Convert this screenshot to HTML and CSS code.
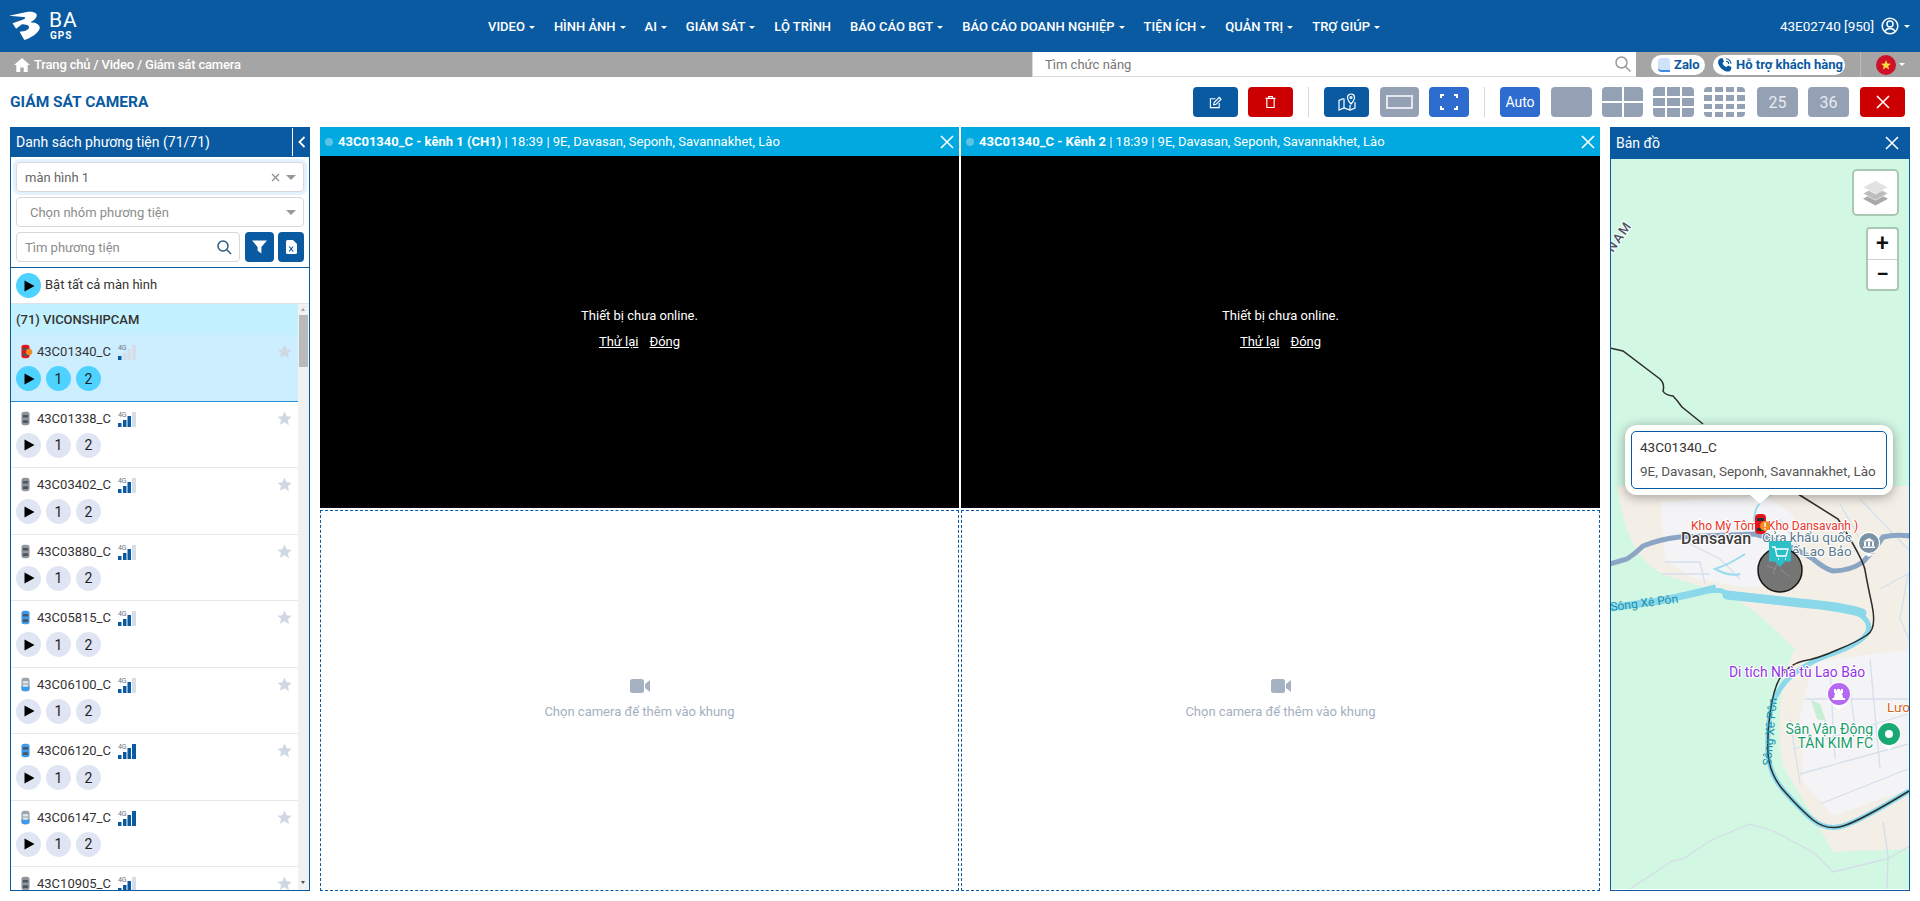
FILE: index.html
```html
<!DOCTYPE html>
<html lang="vi">
<head>
  <meta charset="UTF-8" />
  <meta name="viewport" content="width=device-width, initial-scale=1.0" />
  <title>Giám sát camera</title>
  <link rel="stylesheet" href="styles.css">
</head>
<body>

  <svg class="defs" width="0" height="0">
    <symbol id="car" viewBox="0 0 10 16">
      <rect x="0.5" y="0.5" width="9" height="15" rx="3" fill="currentColor"/>
      <rect x="2" y="4" width="6" height="3" rx="1" fill="#4a5560"/>
      <rect x="2" y="10" width="6" height="3" rx="1" fill="#4a5560"/>
    </symbol>
    <symbol id="carmix" viewBox="0 0 10 16">
      <rect x="0.5" y="0.5" width="9" height="15" rx="3" fill="#9aa5ad"/>
      <path d="M0.5 10h9v2.5a3 3 0 0 1-3 3h-3a3 3 0 0 1-3-3z" fill="#3d9be9"/>
      <rect x="2" y="4" width="6" height="3" rx="1" fill="#dfe6ea"/>
      <rect x="2" y="8" width="6" height="2.5" rx="1" fill="#dfe6ea"/>
    </symbol>
    <symbol id="star" viewBox="0 0 16 16">
      <path d="M8 .6l2.3 4.9 5.3.7-3.9 3.7 1 5.3L8 12l-4.7 2.6 1-5.3L.4 6.2l5.3-.7z"/>
    </symbol>
    <symbol id="play" viewBox="0 0 11 12">
      <path d="M0.5 0.5L10.5 6L0.5 11.5z"/>
    </symbol>
    <symbol id="sig1" viewBox="0 0 18 15">
      <rect x="0" y="11" width="3.5" height="4" class="bar-on"/><rect x="5" y="8" width="3.5" height="7" class="bar-off"/><rect x="9.5" y="4" width="3.5" height="11" class="bar-off"/><rect x="14" y="0" width="4" height="15" class="bar-off"/>
    </symbol>
    <symbol id="sig3" viewBox="0 0 18 15">
      <rect x="0" y="11" width="3.5" height="4" class="bar-on"/><rect x="5" y="8" width="3.5" height="7" class="bar-on"/><rect x="9.5" y="4" width="3.5" height="11" class="bar-on"/><rect x="14" y="0" width="4" height="15" class="bar-off"/>
    </symbol>
    <symbol id="sig4" viewBox="0 0 18 15">
      <rect x="0" y="11" width="3.5" height="4" class="bar-on"/><rect x="5" y="8" width="3.5" height="7" class="bar-on"/><rect x="9.5" y="4" width="3.5" height="11" class="bar-on"/><rect x="14" y="0" width="4" height="15" class="bar-on"/>
    </symbol>
    <symbol id="cam" viewBox="0 0 20 14">
      <rect x="0" y="0" width="14" height="14" rx="2.5"/>
      <path d="M15 5l5-4v12l-5-4z"/>
    </symbol>
    <symbol id="close" viewBox="0 0 14 14">
      <path d="M1 1l12 12M13 1L1 13" fill="none" stroke="currentColor" stroke-width="1.6"/>
    </symbol>
  </svg>

  <header class="topbar">
    <div class="logo">
      <svg class="logo-mark" viewBox="0 0 28 32" width="33" height="30" preserveAspectRatio="none">
        <path d="M0 5L15 1C22 0 25 3 23 7C22 9 20 11 18 12C23 12 27 15 26 19C24 25 18 29 13 31L9 22C13 22 17 20 17 17C17 15 14 14 11 14L6 19L3 13L11 9.500C14 8.500 15 6.500 12 6.500Z" fill="#fff"/>
      </svg>
      <div class="logo-text"><span class="logo-ba">BA</span><span class="logo-gps">GPS</span></div>
    </div>
    <nav class="nav">
      <a class="caret">VIDEO</a>
      <a class="caret">HÌNH ẢNH</a>
      <a class="caret">AI</a>
      <a class="caret">GIÁM SÁT</a>
      <a>LỘ TRÌNH</a>
      <a class="caret">BÁO CÁO BGT</a>
      <a class="caret">BÁO CÁO DOANH NGHIỆP</a>
      <a class="caret">TIỆN ÍCH</a>
      <a class="caret">QUẢN TRỊ</a>
      <a class="caret">TRỢ GIÚP</a>
    </nav>
    <div class="user caret">
      <span>43E02740 [950]</span>
      <svg viewBox="0 0 18 18" width="18" height="18" fill="none" stroke="#fff" stroke-width="1.5">
        <circle cx="9" cy="9" r="7.800"/><circle cx="9" cy="7" r="3"/><path d="M3.800 14.500C5 12 7 11.500 9 11.500S13 12 14.200 14.500"/>
      </svg>
    </div>
  </header>

  <div class="crumbbar">
    <svg class="home" viewBox="0 0 16 14" width="16" height="14" fill="#fff">
      <path d="M8 0L0 7h2.300v7h4V9.500h3.400V14h4V7H16z"/>
    </svg>
    <span class="crumbs">Trang chủ / Video / Giám sát camera</span>
    <div class="func-search">
      <span>Tìm chức năng</span>
      <svg viewBox="0 0 16 16" width="16" height="16" fill="none" stroke="#9a9a9a" stroke-width="1.500">
        <circle cx="6.500" cy="6.500" r="5.500"/><path d="M10.500 10.500L15.500 15.500"/>
      </svg>
    </div>
    <a class="pill pill-zalo">
      <svg viewBox="0 0 14 16" width="14" height="16"><rect x="1" y="1" width="12" height="14" rx="3.500" fill="#cfe2fb"/><path d="M1 11c0 3 2 4 4 4h8v-2H5c-2 0-3-.5-4-2z" fill="#3f8ae8"/></svg>
      Zalo
    </a>
    <a class="pill pill-help">
      <svg viewBox="0 0 16 16" width="16" height="16" fill="none"><path d="M3 1.500L5.500 1l1.500 3.500-1.500 1.500c.5 2 2 3.500 4 4l1.500-1.500L14.500 10l-.5 2.500C13 15 10.500 15 8 14 4.500 12.500 2 9.500 1.200 6.500.8 4.500 1.500 2.500 3 1.500z" fill="#0a5aa2"/><path d="M9 1.800a5 5 0 0 1 5 5M9 4.200a2.700 2.700 0 0 1 2.700 2.700" stroke="#0a5aa2" stroke-width="1.100"/></svg>
      Hỗ trợ khách hàng
    </a>
    <span class="crumb-sep"></span>
    <svg class="flag" viewBox="0 0 20 20" width="20" height="20">
      <circle cx="10" cy="10" r="10" fill="#cf1128"/>
      <path d="M10 5l1.400 3.500 3.600.2-2.800 2.300 1 3.500-3.200-2-3.200 2 1-3.500L5 8.700l3.600-.2z" fill="#ffd83a"/>
    </svg>
    <span class="caret flag-caret"></span>
  </div>

  <div class="titlebar">
    <h1>GIÁM SÁT CAMERA</h1>
    <div class="tools">
      <button class="tool tool-wide blue">
        <svg viewBox="0 0 14 14" width="13" height="13" fill="none" stroke="#fff" stroke-width="1.200"><path d="M11 7.500V12.500H1.500V3H7"/><path d="M5 9.500L5.500 7 11 1.500 13 3.500 7.500 9z"/></svg>
      </button>
      <button class="tool tool-wide red">
        <svg viewBox="0 0 12 14" width="11" height="14" fill="none" stroke="#fff" stroke-width="1.300"><path d="M2 3.500V13h8V3.500M0.500 3h11M4 3V1h4v2"/></svg>
      </button>
      <span class="tool-sep"></span>
      <button class="tool tool-wide blue tool-map">
        <svg viewBox="0 0 18 18" width="18" height="18" fill="none" stroke="#fff" stroke-width="1.200"><path d="M5.500 5.500L1 7.500V17l5-2 6 2 5-2V9"/><path d="M6 5.500V15M12 12v5"/><path d="M13 1a3.500 3.500 0 0 0-3.500 3.500C9.500 7 13 11 13 11s3.500-4 3.500-6.500A3.500 3.500 0 0 0 13 1z"/><circle cx="13" cy="4.500" r="1"/></svg>
      </button>
      <button class="tool gray tool-box"><span class="box-icon"></span></button>
      <button class="tool mid tool-full">
        <svg viewBox="0 0 18 16" width="18" height="16" fill="none" stroke="#fff" stroke-width="2"><path d="M1 4V1h3M14 1h3v3M17 12v3h-3M4 15H1v-3"/></svg>
      </button>
      <span class="tool-sep"></span>
      <button class="tool mid auto">Auto</button>
      <button class="tool gray"></button>
      <div class="tool layout layout-2"><i></i><i></i><i></i><i></i></div>
      <div class="tool layout layout-3"><i></i><i></i><i></i><i></i><i></i><i></i><i></i><i></i><i></i></div>
      <div class="tool layout layout-4"><i></i><i></i><i></i><i></i><i></i><i></i><i></i><i></i><i></i><i></i><i></i><i></i><i></i><i></i><i></i><i></i></div>
      <button class="tool gray num num-first">25</button>
      <button class="tool gray num">36</button>
      <button class="tool tool-wide red close-all">
        <svg viewBox="0 0 14 14" width="14" height="14"><use href="#close"/></svg>
      </button>
    </div>
  </div>

  <main class="workspace">

    <aside class="vehicles">
      <div class="panel-head vehicles-head">
        <span>Danh sách phương tiện (71/71)</span>
        <button class="collapse">
          <svg viewBox="0 0 8 12" width="8" height="12" fill="none" stroke="#fff" stroke-width="1.800"><path d="M6.500 1L1.500 6l5 5"/></svg>
        </button>
      </div>
      <div class="filters">
        <div class="select select-focus">
          <span>màn hình 1</span>
          <svg class="sel-x" viewBox="0 0 9 9" width="9" height="9" fill="none" stroke="#8a8f96" stroke-width="1.200"><path d="M1 1l7 7M8 1L1 8"/></svg>
          <i class="sel-arrow"></i>
        </div>
        <div class="select select-group">
          <span>Chọn nhóm phương tiện</span>
          <i class="sel-arrow"></i>
        </div>
        <div class="search-row">
          <div class="search-box">
            <span>Tìm phương tiện</span>
            <svg viewBox="0 0 15 15" width="15" height="15" fill="none" stroke="#2a5b86" stroke-width="1.500"><circle cx="6" cy="6" r="5"/><path d="M9.800 9.800L14 14"/></svg>
          </div>
          <button class="square-btn filter-btn">
            <svg viewBox="0 0 16 14" width="15" height="14" fill="#fff"><path d="M0 0h16L10 7v7L6 11V7z"/></svg>
          </button>
          <button class="square-btn excel-btn">
            <svg viewBox="0 0 11 14" width="11" height="14"><path d="M0 1.500A1.500 1.500 0 0 1 1.500 0H7l4 4v8.500a1.500 1.500 0 0 1-1.500 1.500h-8A1.500 1.500 0 0 1 0 12.500z" fill="#fff"/><path d="M3.200 6.500l4 5M7.200 6.500l-4 5" stroke="#0a5aa2" stroke-width="1.200"/></svg>
          </button>
        </div>
      </div>
      <div class="all-row">
        <span class="round on"><svg viewBox="0 0 11 12" width="11" height="12"><use href="#play"/></svg></span>
        <span class="all-label">Bật tất cả màn hình</span>
      </div>
      <div class="list-wrap">
        <div class="list">
          <div class="group">(71) VICONSHIPCAM</div>

          <div class="row row-active">
            <div class="row-top">
              <svg class="car car-red" viewBox="0 0 10 16"><use href="#car"/><circle cx="9" cy="8.500" r="3.500" fill="#f28a1e"/></svg>
              <span class="plate">43C01340_C</span>
              <span class="sig"><em>4G</em><svg><use href="#sig1"/></svg></span>
              <svg class="star"><use href="#star"/></svg>
            </div>
            <div class="row-btns">
              <span class="round on"><svg viewBox="0 0 11 12" width="11" height="12"><use href="#play"/></svg></span>
              <span class="round on">1</span>
              <span class="round on">2</span>
            </div>
          </div>

          <div class="row">
            <div class="row-top">
              <svg class="car car-gray"><use href="#car"/></svg>
              <span class="plate">43C01338_C</span>
              <span class="sig"><em>4G</em><svg><use href="#sig3"/></svg></span>
              <svg class="star"><use href="#star"/></svg>
            </div>
            <div class="row-btns">
              <span class="round"><svg viewBox="0 0 11 12" width="11" height="12"><use href="#play"/></svg></span>
              <span class="round">1</span>
              <span class="round">2</span>
            </div>
          </div>

          <div class="row">
            <div class="row-top">
              <svg class="car car-gray"><use href="#car"/></svg>
              <span class="plate">43C03402_C</span>
              <span class="sig"><em>4G</em><svg><use href="#sig3"/></svg></span>
              <svg class="star"><use href="#star"/></svg>
            </div>
            <div class="row-btns">
              <span class="round"><svg viewBox="0 0 11 12" width="11" height="12"><use href="#play"/></svg></span>
              <span class="round">1</span>
              <span class="round">2</span>
            </div>
          </div>

          <div class="row">
            <div class="row-top">
              <svg class="car car-gray"><use href="#car"/></svg>
              <span class="plate">43C03880_C</span>
              <span class="sig"><em>4G</em><svg><use href="#sig3"/></svg></span>
              <svg class="star"><use href="#star"/></svg>
            </div>
            <div class="row-btns">
              <span class="round"><svg viewBox="0 0 11 12" width="11" height="12"><use href="#play"/></svg></span>
              <span class="round">1</span>
              <span class="round">2</span>
            </div>
          </div>

          <div class="row">
            <div class="row-top">
              <svg class="car car-blue"><use href="#car"/></svg>
              <span class="plate">43C05815_C</span>
              <span class="sig"><em>4G</em><svg><use href="#sig3"/></svg></span>
              <svg class="star"><use href="#star"/></svg>
            </div>
            <div class="row-btns">
              <span class="round"><svg viewBox="0 0 11 12" width="11" height="12"><use href="#play"/></svg></span>
              <span class="round">1</span>
              <span class="round">2</span>
            </div>
          </div>

          <div class="row">
            <div class="row-top">
              <svg class="car"><use href="#carmix"/></svg>
              <span class="plate">43C06100_C</span>
              <span class="sig"><em>4G</em><svg><use href="#sig3"/></svg></span>
              <svg class="star"><use href="#star"/></svg>
            </div>
            <div class="row-btns">
              <span class="round"><svg viewBox="0 0 11 12" width="11" height="12"><use href="#play"/></svg></span>
              <span class="round">1</span>
              <span class="round">2</span>
            </div>
          </div>

          <div class="row">
            <div class="row-top">
              <svg class="car car-blue"><use href="#car"/></svg>
              <span class="plate">43C06120_C</span>
              <span class="sig"><em>4G</em><svg><use href="#sig4"/></svg></span>
              <svg class="star"><use href="#star"/></svg>
            </div>
            <div class="row-btns">
              <span class="round"><svg viewBox="0 0 11 12" width="11" height="12"><use href="#play"/></svg></span>
              <span class="round">1</span>
              <span class="round">2</span>
            </div>
          </div>

          <div class="row">
            <div class="row-top">
              <svg class="car"><use href="#carmix"/></svg>
              <span class="plate">43C06147_C</span>
              <span class="sig"><em>4G</em><svg><use href="#sig4"/></svg></span>
              <svg class="star"><use href="#star"/></svg>
            </div>
            <div class="row-btns">
              <span class="round"><svg viewBox="0 0 11 12" width="11" height="12"><use href="#play"/></svg></span>
              <span class="round">1</span>
              <span class="round">2</span>
            </div>
          </div>

          <div class="row">
            <div class="row-top">
              <svg class="car car-gray"><use href="#car"/></svg>
              <span class="plate">43C10905_C</span>
              <span class="sig"><em>4G</em><svg><use href="#sig3"/></svg></span>
              <svg class="star"><use href="#star"/></svg>
            </div>
          </div>
        </div>
        <div class="scrollbar">
          <i class="scroll-up"></i>
          <i class="scroll-thumb"></i>
          <i class="scroll-down"></i>
        </div>
      </div>
    </aside>

    <section class="videos">
      <div class="cell">
        <div class="cell-head">
          <i class="cell-dot"></i>
          <span><b>43C01340_C - kênh 1 (CH1)</b> | 18:39 | 9E, Davasan, Seponh, Savannakhet, Lào</span>
          <svg class="cell-close" viewBox="0 0 14 14" width="14" height="14"><use href="#close"/></svg>
        </div>
        <div class="screen">
          <p>Thiết bị chưa online.</p>
          <div class="screen-links"><a>Thử lại</a><a>Đóng</a></div>
        </div>
      </div>
      <div class="cell">
        <div class="cell-head">
          <i class="cell-dot"></i>
          <span><b>43C01340_C - Kênh 2</b> | 18:39 | 9E, Davasan, Seponh, Savannakhet, Lào</span>
          <svg class="cell-close" viewBox="0 0 14 14" width="14" height="14"><use href="#close"/></svg>
        </div>
        <div class="screen">
          <p>Thiết bị chưa online.</p>
          <div class="screen-links"><a>Thử lại</a><a>Đóng</a></div>
        </div>
      </div>
      <div class="cell cell-empty">
        <svg viewBox="0 0 20 14" width="20" height="14" fill="#a6b1c2"><use href="#cam"/></svg>
        <span>Chọn camera để thêm vào khung</span>
      </div>
      <div class="cell cell-empty">
        <svg viewBox="0 0 20 14" width="20" height="14" fill="#a6b1c2"><use href="#cam"/></svg>
        <span>Chọn camera để thêm vào khung</span>
      </div>
    </section>

    <aside class="map-panel">
      <div class="panel-head map-head">
        <span>Bản đồ</span>
        <svg viewBox="0 0 14 14" width="14" height="14"><use href="#close"/></svg>
      </div>
      <div class="map">
        <!-- viewBox uses page coordinates so the shapes are easy to place -->
        <svg class="map-canvas" viewBox="1611 160 298 730" width="298" height="730">
          <rect x="1611" y="160" width="298" height="730" fill="#d2f7e3"/>

          <path d="M1617 487Q1622 525 1637 553Q1650 570 1667 577L1710 590Q1740 600 1760 617L1795 650Q1780 680 1780 717Q1778 745 1783 767L1820 830L1833 853L1909 850V487Z" fill="#f3efe6"/>
          <path d="M1660 503L1757 497Q1785 505 1795 520L1790 575Q1770 590 1740 588L1690 578L1665 560Z" fill="#f4f3f5"/>
          <path d="M1813 663L1909 650V790L1833 817L1803 783L1800 717Z" fill="#f4f3f5"/>
          <path d="M1811 701L1820 705L1826 722L1817 720Z" fill="#c8efd6"/>

          <g fill="none" stroke="#d5e0ec" stroke-width="1.300">
            <path d="M1665 563H1700L1705 585M1662 575H1710M1690 545L1720 560L1740 580M1780 520L1800 550M1840 505L1860 540M1860 500L1908 550M1880 590L1908 575L1900 620L1909 640"/>
            <path d="M1805 700H1908M1830 670L1835 760M1870 660L1880 770M1793 750L1908 715M1800 775L1908 745M1820 805L1908 770M1850 690L1855 730M1790 720L1800 785"/>
          </g>
          <path d="M1630 890L1672 862L1683 860L1710 842L1733 832L1750 825L1773 832L1813 853L1833 873L1887 860L1910 847M1883 823L1888 857L1887 890" fill="none" stroke="#d5dce8" stroke-width="1.300"/>

          <path d="M1610 565L1627 560Q1635 555 1643 547Q1660 540 1680 538L1755 535Q1790 545 1813 560Q1825 570 1833 572Q1850 572 1863 563Q1875 550 1883 538Q1895 535 1910 537" fill="none" stroke="#8ca5c4" stroke-width="5"/>

          <path d="M1772 495Q1755 505 1755 515Q1752 525 1760 530M1745 555Q1730 565 1715 570Q1730 578 1740 575" fill="none" stroke="#9bdcee" stroke-width="2"/>
          <path d="M1610 608L1660 601Q1717 589 1722 592Q1727 596 1763 600Q1800 603 1830 607Q1860 612 1866 621Q1873 630 1863 639Q1853 648 1826 657Q1800 667 1786 682Q1773 697 1770 715Q1767 733 1768 755Q1770 777 1785 793Q1800 810 1813 821Q1827 832 1843 827Q1860 822 1909 792" fill="none" stroke="#8ad8ea" stroke-width="5"/>
          <path d="M1610 609L1660 602Q1700 593 1716 589" fill="none" stroke="#8ad8ea" stroke-width="7"/>
          <path d="M1727 596Q1763 600 1800 604Q1845 608 1862 614" fill="none" stroke="#8ad8ea" stroke-width="9" stroke-linecap="round"/>

          <path d="M1610 349L1623 352L1660 380Q1665 385 1663 392Q1665 396 1673 397Q1677 401 1682 408L1703 425M1798 495L1838 520Q1863 560 1865 571Q1867 583 1872 606Q1877 630 1867 636Q1857 643 1837 651Q1817 660 1803 662Q1790 665 1781 677Q1773 690 1770 715Q1767 733 1768 755Q1770 777 1785 793Q1800 810 1813 821Q1827 832 1843 827Q1860 822 1909 792" fill="none" stroke="#2c2c2c" stroke-width="1.500"/>

          <text x="1613" y="254" transform="rotate(-55 1613 254)" class="map-nam">NAM</text>
          <text x="1611" y="612" transform="rotate(-7 1611 612)" class="map-river">Sông Xê Pôn</text>
          <text x="1771" y="767" transform="rotate(-85 1771 767)" class="map-river">Sông Xê Pôn</text>

          <text x="1681" y="545" class="map-town">Dansavan</text>
          <text x="1762" y="543" class="map-poi">Cửa khẩu quốc</text>
          <text x="1792" y="557" class="map-poi">ế Lao Bảo</text>

          <path d="M1869 558l-5-3h10z" fill="#fff"/>
          <circle cx="1869" cy="544" r="11" fill="#fff"/>
          <circle cx="1869" cy="544" r="10" fill="#7c93a5"/>
          <path d="M1863 549h12v-1.500h-12zM1864 547h2v-4h-2zM1868 547h2v-4h-2zM1872 547h2v-4h-2zM1863 542.500h12L1869 539z" fill="#fff"/>

          <circle cx="1780" cy="571" r="22" fill="#6e6e6e" fill-opacity=".95" stroke="#161616" stroke-width="1.500"/>
          <path d="M1779 560L1773 575M1776 570L1767 567M1780 570L1790 578" fill="none" stroke="#8a8f96" stroke-width="1"/>
          <path d="M1769 542h22v20.500h-6l-5 5.500-5-5.500h-6z" fill="#2bc0c8"/>
          <path d="M1772 548h3l2 9h9l2-7h-12M1778 560h1M1785 560h1" fill="none" stroke="#fff" stroke-width="1.300"/>

          <text x="1691" y="531" class="map-red">Kho Mỳ Tôm ( Kho Dansavanh )</text>
          <rect x="1755" y="515" width="11" height="20" rx="4" fill="#e4141b"/>
          <rect x="1757" y="519" width="7" height="3" fill="#24303c"/>
          <rect x="1757" y="529" width="7" height="3" fill="#24303c"/>
          <circle cx="1765" cy="527" r="5" fill="#f28a1e"/>
          <rect x="1764.300" y="523.500" width="1.400" height="4.500" fill="#fff"/>
          <rect x="1764.300" y="529" width="1.400" height="1.400" fill="#fff"/>

          <text x="1729" y="678" class="map-purple">Di tích Nhà tù Lao Bảo</text>
          <path d="M1839 711l-6-5h12z" fill="#fff"/>
          <circle cx="1839" cy="695" r="12" fill="#fff"/>
          <circle cx="1839" cy="695" r="11" fill="#b569f3"/>
          <path d="M1833 701h12v-2h-2l-1-5h1v-4h-2v1.500h-1V690h-3v1.500h-1V690h-2v4h1l-1 5h-2z" fill="#fff"/>

          <text x="1887" y="713" class="map-orange">Lươ</text>
          <text x="1873" y="735" text-anchor="end" class="map-green">Sân Vận Động</text>
          <text x="1873" y="749" text-anchor="end" class="map-green">TÂN KIM FC</text>
          <path d="M1889 751l-6-5h12z" fill="#fff"/>
          <circle cx="1889" cy="735" r="12" fill="#fff"/>
          <circle cx="1889" cy="735" r="11" fill="#1aa974"/>
          <circle cx="1889" cy="735" r="4" fill="#fff"/>
        </svg>

        <div class="map-layers">
          <svg viewBox="0 0 28 26" width="27" height="26">
            <path d="M14 12L27 19L14 26L1 19Z" fill="#a9a9a9"/>
            <path d="M14 6.500L27 13.500L14 20.500L1 13.500Z" fill="#bdbdbd" stroke="#fff" stroke-width=".6"/>
            <path d="M14 0L27 7L14 14L1 7Z" fill="#e2e2e2" stroke="#fff" stroke-width=".6"/>
          </svg>
        </div>
        <div class="map-zoom">
          <span>+</span>
          <span>−</span>
        </div>
        <div class="map-pop">
          <div class="map-pop-inner">
            <strong>43C01340_C</strong>
            <span>9E, Davasan, Seponh, Savannakhet, Lào</span>
          </div>
        </div>
      </div>
    </aside>

  </main>

</body>
</html>
```

FILE: styles.css
```css
* {
  box-sizing: border-box;
}

html, body {
  height: 100%;
}

body {
  margin: 0;
  overflow: hidden;
  font-family: Roboto, "Noto Sans", sans-serif;
  font-size: 14px;
  color: #333;
  background: #fff;
}

.defs {
  position: absolute;
}

button {
  border: 0;
  padding: 0;
  font-family: inherit;
}

.caret::after {
  content: "";
  display: inline-block;
  margin-left: 4px;
  vertical-align: 2px;
  border-top: 3px solid currentColor;
  border-left: 3px solid transparent;
  border-right: 3px solid transparent;
}

/* top bar */
.topbar {
  display: flex;
  align-items: center;
  height: 52px;
  padding-left: 9px;
  padding-right: 10px;
  background-color: #0a5aa2;
  color: #fff;
}

.logo {
  display: flex;
  align-items: center;
  gap: 7px;
  width: 479px;
}

.logo-text {
  display: flex;
  flex-direction: column;
}

.logo-ba {
  font-size: 21px;
  font-weight: 400;
  line-height: 19px;
  letter-spacing: 1px;
}

.logo-gps {
  font-size: 10px;
  font-weight: 700;
  line-height: 11px;
  letter-spacing: 1px;
  padding-left: 1px;
}

.nav {
  display: flex;
  gap: 19px;
  font-size: 13px;
  font-weight: 500;
}

.user {
  display: flex;
  align-items: center;
  gap: 7px;
  margin-left: auto;
  font-size: 13.500px;
}

.user.caret::after {
  margin-left: -2px;
  vertical-align: 0;
}

/* breadcrumb */
.crumbbar {
  display: flex;
  align-items: center;
  height: 25px;
  padding-left: 14px;
  background-color: #a5a5a5;
  color: #fff;
}

.crumbs {
  width: 998px;
  margin-left: 4px;
  font-size: 13px;
  font-weight: 500;
  letter-spacing: -0.170px;
}

.func-search {
  display: flex;
  align-items: center;
  justify-content: space-between;
  width: 604px;
  height: 25px;
  padding: 0 5px 0 12px;
  background: #fff;
  border-left: 1px solid #d5d8e0;
  border-bottom: 1px solid #d5d8e0;
  color: #777;
  font-size: 13px;
}

.pill {
  display: flex;
  align-items: center;
  height: 20px;
  border-radius: 10px;
  background: #fff;
  color: #0a5aa2;
  font-size: 13px;
  font-weight: 700;
}

.pill-zalo {
  gap: 3px;
  width: 54px;
  margin-left: 15px;
  padding-left: 6px;
}

.pill-help {
  gap: 3px;
  width: 132px;
  margin-left: 8px;
  padding-left: 4px;
}

.crumb-sep {
  width: 1px;
  height: 25px;
  margin-left: 15px;
  background: #bcbcbc;
}

.flag {
  margin-left: 15px;
}

.flag-caret {
  margin-left: -1px;
  margin-top: -3px;
}

/* title row */
.titlebar {
  display: flex;
  align-items: center;
  justify-content: space-between;
  height: 50px;
  padding: 0 15px 0 10px;
}

h1 {
  margin: 0;
  font-size: 15.500px;
  font-weight: 700;
  color: #0a5aa2;
}

.tools {
  display: flex;
  align-items: center;
  gap: 10px;
}

.tool {
  display: flex;
  align-items: center;
  justify-content: center;
  width: 41px;
  height: 30px;
  border-radius: 4px;
  color: #fff;
}

.tool-wide {
  width: 45px;
}

.tool-map {
  margin-right: 1px;
}

.tool-box {
  width: 39px;
}

.tool-full {
  width: 40px;
}

.tool-sep {
  width: 1px;
  height: 30px;
  margin: 0 5px;
  background: #d8d8d8;
}

.blue {
  background-color: #0a5aa2;
}

.red {
  background-color: #cc0000;
}

.gray {
  background-color: #94a0b3;
}

.mid {
  background-color: #2f6ccf;
}

.auto {
  width: 40px;
  margin-right: 1px;
  font-size: 14px;
}

.num {
  font-size: 16px;
  color: #e8ebf0;
}

.num-first {
  margin-left: 2px;
}

.close-all {
  margin-left: 1px;
}

.box-icon {
  width: 27px;
  height: 14px;
  border: 2px solid #e4e7ec;
}

.layout {
  display: grid;
  align-items: stretch;
  justify-content: stretch;
  overflow: hidden;
}

.layout i {
  background-color: #94a0b3;
}

.layout-2 {
  grid-template-columns: repeat(2, 1fr);
  grid-template-rows: repeat(2, 1fr);
  gap: 2px;
}

.layout-3 {
  grid-template-columns: repeat(3, 1fr);
  grid-template-rows: repeat(3, 1fr);
  gap: 2px;
}

.layout-4 {
  grid-template-columns: repeat(4, 1fr);
  grid-template-rows: repeat(4, 1fr);
  gap: 3px;
}

/* main area */
.workspace {
  display: flex;
  gap: 10px;
  height: 764px;
  padding: 0 10px;
}

.panel-head {
  display: flex;
  align-items: center;
  background-color: #0a5aa2;
  color: #fff;
}

.vehicles {
  display: flex;
  flex-direction: column;
  width: 300px;
  border: 1px solid #0a5aa2;
  border-top: 0;
}

.vehicles-head {
  justify-content: space-between;
  flex: none;
  height: 30px;
  padding-left: 6px;
  margin: 0 -1px;
  font-size: 14px;
}

.collapse {
  display: flex;
  align-items: center;
  justify-content: center;
  width: 18px;
  height: 28px;
  background: transparent;
  border-left: 1px solid #fff;
}

.filters {
  display: flex;
  flex-direction: column;
  flex: none;
  gap: 5px;
  padding: 5px 5px 5px;
  border-bottom: 1px solid #0a5aa2;
  font-size: 13px;
}

.select {
  display: flex;
  align-items: center;
  height: 30px;
  padding: 0 7px 0 8px;
  border: 1px solid #d5d8de;
  border-radius: 4px;
  color: #666;
}

.select span {
  flex: 1;
}

.select-focus {
  box-shadow: 0 0 0 3px #e6f2fb;
}

.select-group {
  padding-left: 13px;
  color: #8c8c8c;
}

.sel-x {
  margin-right: 6px;
}

.sel-arrow {
  border-top: 5px solid #999;
  border-left: 5px solid transparent;
  border-right: 5px solid transparent;
}

.search-row {
  display: flex;
  align-items: center;
  gap: 4px;
}

.search-box {
  display: flex;
  align-items: center;
  justify-content: space-between;
  width: 224px;
  height: 30px;
  margin-right: 1px;
  padding: 0 7px 0 8px;
  border: 1px solid #d5d8de;
  border-radius: 4px;
  color: #8c8c8c;
}

.square-btn {
  display: flex;
  align-items: center;
  justify-content: center;
  height: 30px;
  border-radius: 4px;
  background-color: #0a5aa2;
}

.filter-btn {
  width: 29px;
}

.excel-btn {
  width: 26px;
}

.all-row {
  display: flex;
  align-items: center;
  flex: none;
  gap: 4px;
  height: 36px;
  padding-left: 5px;
  border-bottom: 1px solid #dde2e8;
  font-size: 13px;
  color: #333;
}

.all-label {
  padding-bottom: 2px;
}

.round {
  display: flex;
  align-items: center;
  justify-content: center;
  width: 25px;
  height: 25px;
  border-radius: 50%;
  background-color: #dfe5f2;
  color: #222;
  font-size: 14px;
  fill: #000;
}

.round.on {
  background-color: #4ed2ff;
}

.round svg {
  margin-left: 1px;
}

.list-wrap {
  position: relative;
  flex: 1;
  min-height: 0;
  overflow: hidden;
}

.list {
  width: 287px;
}

.group {
  display: flex;
  align-items: center;
  height: 31px;
  padding-left: 5px;
  background-color: #c4f1ff;
  font-weight: 500;
  font-size: 13px;
  color: #333;
}

.row {
  height: 66.500px;
  padding: 8px 5px 0;
  border-bottom: 1px solid #e6e8ec;
}

.row-active {
  background-color: #cdeeff;
  border-bottom-color: #2a8fd0;
}

.row-top {
  display: flex;
  align-items: center;
  height: 17px;
}

.row-btns {
  display: flex;
  gap: 5px;
  margin-top: 6px;
}

.car {
  flex: none;
  width: 9px;
  height: 15px;
  margin-left: 5px;
  overflow: visible;
}

.car-gray {
  color: #8f959b;
}

.car-blue {
  color: #3d9be9;
}

.car-red {
  color: #e4141b;
}

.plate {
  margin-left: 7px;
  font-size: 13px;
  color: #333;
}

.sig {
  position: relative;
  width: 18px;
  height: 15px;
  margin-left: 7px;
  margin-top: 2px;
}

.sig svg {
  display: block;
  width: 18px;
  height: 15px;
}

.sig em {
  position: absolute;
  top: -1px;
  left: 0;
  font-size: 7px;
  font-style: normal;
  line-height: 8px;
  color: #6d7580;
}

.bar-on {
  fill: #0a5aa2;
}

.bar-off {
  fill: #d5dde8;
}

.star {
  width: 15px;
  height: 15px;
  margin-left: auto;
  margin-right: 1px;
  fill: #cfd8e3;
}

.scrollbar {
  position: absolute;
  top: 0;
  right: 0;
  bottom: 0;
  width: 11px;
  background: #f1f1f1;
}

.scroll-up,
.scroll-down {
  position: absolute;
  left: 3px;
  border-left: 2.500px solid transparent;
  border-right: 2.500px solid transparent;
}

.scroll-up {
  top: 4px;
  border-bottom: 3px solid #a3a3a3;
}

.scroll-down {
  bottom: 6px;
  border-top: 3px solid #505050;
}

.scroll-thumb {
  position: absolute;
  top: 11px;
  left: 1px;
  width: 9px;
  height: 52px;
  background: #b9b9b9;
}

/* video grid */
.videos {
  display: grid;
  grid-template-columns: 639px 639px;
  grid-template-rows: 381px 381px;
  gap: 2px;
  width: 1280px;
}

.cell {
  display: flex;
  flex-direction: column;
}

.cell-head {
  display: flex;
  align-items: center;
  flex: none;
  height: 29px;
  padding: 0 5px 0 5px;
  background-color: #00a9e0;
  color: #fff;
  font-size: 13px;
}

.cell-head b {
  font-weight: 700;
}

.cell-dot {
  width: 8px;
  height: 8px;
  margin-right: 5px;
  border-radius: 50%;
  background-color: #5cc2e6;
}

.cell-close {
  margin-left: auto;
  color: #fff;
}

.screen {
  display: flex;
  flex-direction: column;
  align-items: center;
  justify-content: center;
  flex: 1;
  gap: 11px;
  padding-bottom: 7px;
  background: #000;
  color: #fff;
  font-size: 13px;
}

.screen p {
  margin: 0;
}

.screen-links {
  display: flex;
  gap: 11px;
}

.screen-links a {
  text-decoration: underline;
}

.cell-empty {
  align-items: center;
  justify-content: center;
  gap: 11px;
  padding-bottom: 3px;
  outline: 1px dashed #0a5aa2;
  outline-offset: -1px;
  color: #a5afc0;
  font-size: 13px;
  fill: #a6b1c2;
}

/* map */
.map-panel {
  display: flex;
  flex-direction: column;
  width: 300px;
  border: 1px solid #0a5aa2;
  border-top: 0;
}

.map-head {
  justify-content: space-between;
  flex: none;
  height: 32px;
  margin: 0 -1px;
  padding: 0 11px 0 6px;
  font-size: 14px;
  color: #fff;
}

.map {
  position: relative;
  flex: 1;
  overflow: hidden;
}

.map-canvas {
  display: block;
}

.map-canvas text {
  font-family: Roboto, sans-serif;
  paint-order: stroke;
  stroke: #fff;
  stroke-width: 2px;
  stroke-linejoin: round;
}

.map-nam {
  font-size: 13px;
  font-weight: 500;
  letter-spacing: 1.500px;
  fill: #4b5563;
}

.map-river {
  font-size: 12px;
  fill: #1a93ad;
  stroke: none !important;
}

.map-town {
  font-size: 16px;
  font-weight: 500;
  fill: #3c3c3c;
}

.map-poi {
  font-size: 13.500px;
  fill: #5b7a8f;
}

.map-red {
  font-size: 12px;
  fill: #e8352a;
}

.map-purple {
  font-size: 13.800px;
  fill: #9334e6;
}

.map-orange {
  font-size: 13.500px;
  fill: #d9661a;
}

.map-green {
  font-size: 14px;
  fill: #1a9d6c;
}

.map-layers {
  position: absolute;
  top: 10px;
  right: 10px;
  display: flex;
  align-items: center;
  justify-content: center;
  width: 47px;
  height: 47px;
  border: 2px solid #a9c9b4;
  border-radius: 5px;
  background: #fff;
}

.map-zoom {
  position: absolute;
  top: 68px;
  right: 10px;
  display: flex;
  flex-direction: column;
  width: 33px;
  height: 64px;
  border: 2px solid #a9c9b4;
  border-radius: 4px;
  background: #fff;
  color: #111;
  font-size: 23px;
  font-weight: 500;
}

.map-zoom span {
  display: flex;
  align-items: center;
  justify-content: center;
  flex: 1;
}

.map-zoom span:first-child {
  border-bottom: 1px solid #cfcfcf;
}

.map-pop {
  position: absolute;
  top: 266px;
  left: 14px;
  width: 268px;
  height: 70px;
  padding: 6px;
  border-radius: 12px;
  background: #fff;
  box-shadow: 0 2px 12px rgba(0, 0, 0, 0.35);
}

.map-pop::after {
  content: "";
  position: absolute;
  top: 70px;
  left: 125px;
  border-top: 9px solid #fff;
  border-left: 10px solid transparent;
  border-right: 10px solid transparent;
}

.map-pop-inner {
  display: flex;
  flex-direction: column;
  justify-content: center;
  gap: 8px;
  height: 58px;
  padding-left: 8px;
  padding-bottom: 2px;
  border: 1px solid #0a5aa2;
  border-radius: 5px;
  font-size: 13.500px;
  color: #555;
}

.map-pop-inner strong {
  font-weight: 400;
  font-size: 13.500px;
  color: #333;
}
```
